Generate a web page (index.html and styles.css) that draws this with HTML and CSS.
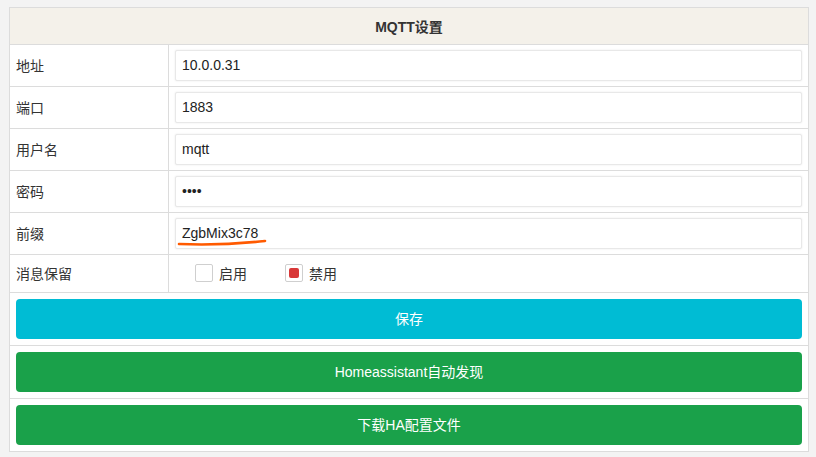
FILE: index.html
```html
<!DOCTYPE html>
<html>
<head>
<meta charset="utf-8">
<link rel="stylesheet" href="styles.css">
</head>
<body>
<div class="wrap">
<table class="form">
  <tr><th colspan="2" class="title">MQTT设置</th></tr>
  <tr><td class="label">地址</td><td class="field"><input class="inp" type="text" value="10.0.0.31"></td></tr>
  <tr><td class="label">端口</td><td class="field"><input class="inp" type="text" value="1883"></td></tr>
  <tr><td class="label">用户名</td><td class="field"><input class="inp" type="text" value="mqtt"></td></tr>
  <tr><td class="label">密码</td><td class="field"><input class="inp" type="password" value="abcd"></td></tr>
  <tr><td class="label">前缀</td><td class="field prefix"><input class="inp" type="text" value="ZgbMix3c78">
    <svg class="mark" width="96" height="10" viewBox="0 0 96 10"><path d="M2 6 C 25 7, 60 6, 88 3" stroke="#ff5a00" stroke-width="2.6" fill="none" stroke-linecap="round"/></svg>
  </td></tr>
  <tr class="short"><td class="label">消息保留</td><td class="field">
    <div class="radios">
      <span class="opt"><span class="box"></span>启用</span>
      <span class="opt"><span class="box on"></span>禁用</span>
    </div>
  </td></tr>
  <tr><td colspan="2" class="btncell"><div class="btn cyan">保存</div></td></tr>
  <tr><td colspan="2" class="btncell"><div class="btn green">Homeassistant自动发现</div></td></tr>
  <tr><td colspan="2" class="btncell"><div class="btn green">下载HA配置文件</div></td></tr>
</table>
</div>
</body>
</html>
```
FILE: styles.css
```css
html, body {
  margin: 0;
  padding: 0;
  background: #f3f3f3;
  font-family: "Liberation Sans", "Noto Sans CJK SC", sans-serif;
  font-size: 14px;
  color: #333;
}
.wrap {
  padding: 7px 0 0 9px;
}
.form {
  width: 800px;
  border-collapse: collapse;
  background: #fff;
  border: 1px solid #dcdcdc;
}
.form td, .form th {
  border: 1px solid #dcdcdc;
  padding: 0;
}
.title {
  height: 36px;
  background: #f4f1ea;
  font-weight: bold;
  color: #333;
  font-size: 14px;
}
.label {
  width: 152px;
  height: 39px;
  padding: 0 0 2px 6px !important;
  color: #333;
}
.field {
  padding: 0 6px !important;
  position: relative;
}
.inp {
  display: block;
  box-sizing: border-box;
  width: 100%;
  height: 31px;
  border: 1px solid #e8e8e8;
  box-shadow: 0 0 2px #e6e6e6;
  border-radius: 2px;
  padding: 0 6px 2px;
  font-family: "Liberation Sans", "Noto Sans CJK SC", sans-serif;
  font-size: 14px;
  color: #222;
  background: #fff;
  outline: none;
}
.mark {
  position: absolute;
  left: 8px;
  top: 25px;
}
.short .label {
  height: 35px;
}
.radios {
  display: flex;
  padding-left: 20px;
  padding-bottom: 2px;
  gap: 38px;
}
.opt {
  display: flex;
  align-items: center;
  gap: 6px;
  color: #333;
}
.box {
  box-sizing: border-box;
  width: 18px;
  height: 18px;
  border: 1px solid #cfcfcf;
  border-radius: 2px;
  background: #fff;
  display: flex;
  align-items: center;
  justify-content: center;
}
.box.on::after {
  content: "";
  width: 10px;
  height: 10px;
  border-radius: 2px;
  background: #d83838;
}
.btncell {
  padding: 6px !important;
}
.btn {
  height: 40px;
  padding-bottom: 2px;
  box-sizing: border-box;
  border-radius: 4px;
  color: #fff;
  display: flex;
  align-items: center;
  justify-content: center;
  font-size: 14px;
}
.cyan { background: #00bcd4; }
.green { background: #1aa14a; }
```
